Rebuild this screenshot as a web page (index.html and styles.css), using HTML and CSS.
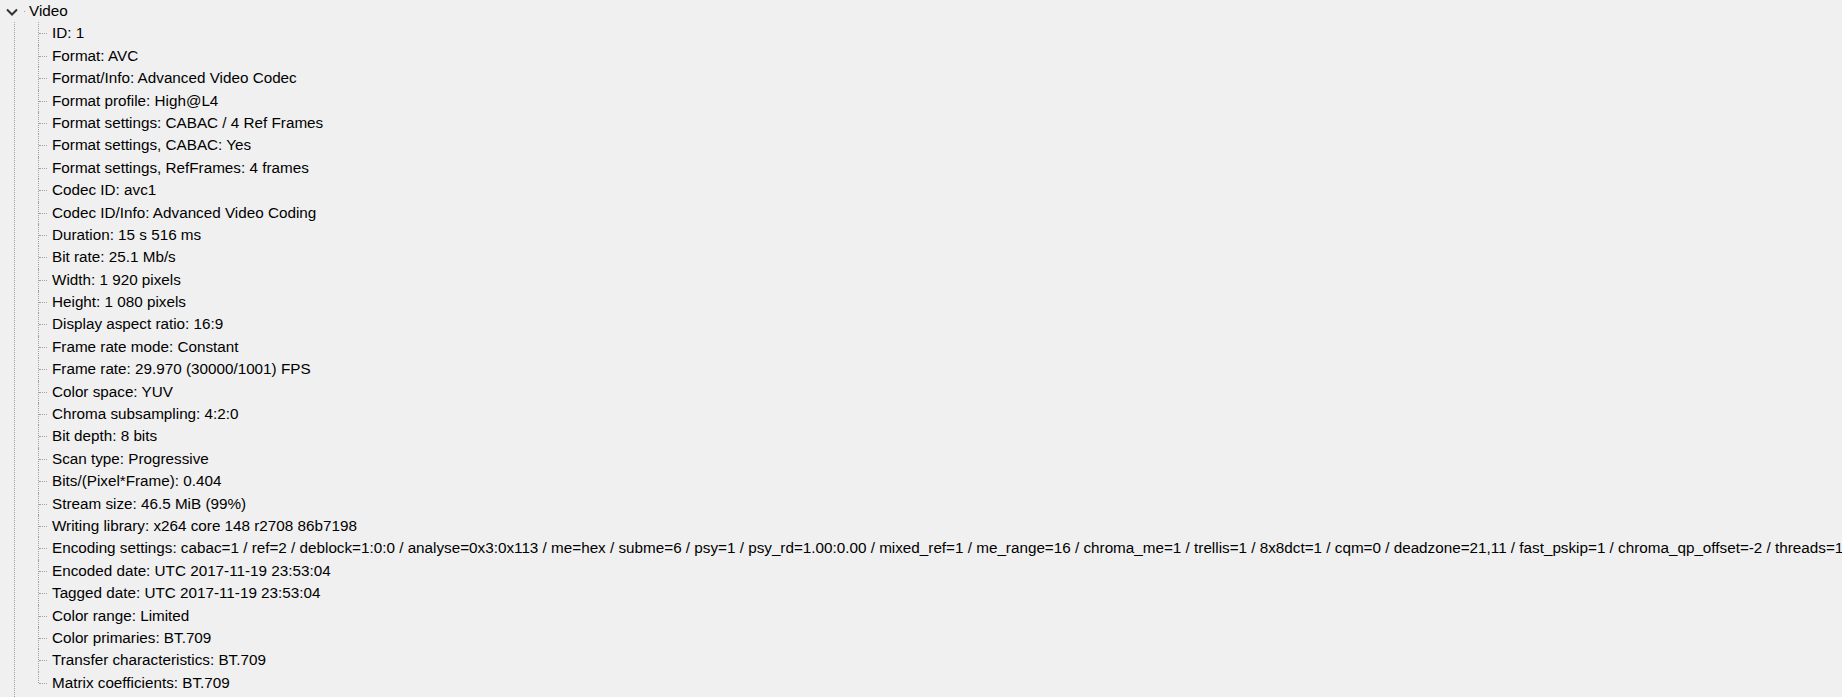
FILE: index.html
```html
<!DOCTYPE html>
<html lang="en">
<head>
  <meta charset="UTF-8">
  <title>MediaInfo - Tree view</title>
  <link rel="stylesheet" href="styles.css">
</head>
<body>
  <div class="tree">
    <div class="row root">
      <svg class="chevron" width="12" height="8" viewBox="0 0 12 8"><path d="M1 1.5 L6 6.5 L11 1.5" fill="none" stroke="#333" stroke-width="2"/></svg>
      <span class="root-dot"></span>
      <span class="label">Video</span>
    </div>
    <div class="level">
      <ul class="children">
        <li>ID: 1</li>
        <li>Format: AVC</li>
        <li>Format/Info: Advanced Video Codec</li>
        <li>Format profile: High@L4</li>
        <li>Format settings: CABAC / 4 Ref Frames</li>
        <li>Format settings, CABAC: Yes</li>
        <li>Format settings, RefFrames: 4 frames</li>
        <li>Codec ID: avc1</li>
        <li>Codec ID/Info: Advanced Video Coding</li>
        <li>Duration: 15 s 516 ms</li>
        <li>Bit rate: 25.1 Mb/s</li>
        <li>Width: 1 920 pixels</li>
        <li>Height: 1 080 pixels</li>
        <li>Display aspect ratio: 16:9</li>
        <li>Frame rate mode: Constant</li>
        <li>Frame rate: 29.970 (30000/1001) FPS</li>
        <li>Color space: YUV</li>
        <li>Chroma subsampling: 4:2:0</li>
        <li>Bit depth: 8 bits</li>
        <li>Scan type: Progressive</li>
        <li>Bits/(Pixel*Frame): 0.404</li>
        <li>Stream size: 46.5 MiB (99%)</li>
        <li>Writing library: x264 core 148 r2708 86b7198</li>
        <li>Encoding settings: cabac=1 / ref=2 / deblock=1:0:0 / analyse=0x3:0x113 / me=hex / subme=6 / psy=1 / psy_rd=1.00:0.00 / mixed_ref=1 / me_range=16 / chroma_me=1 / trellis=1 / 8x8dct=1 / cqm=0 / deadzone=21,11 / fast_pskip=1 / chroma_qp_offset=-2 / threads=12</li>
        <li>Encoded date: UTC 2017-11-19 23:53:04</li>
        <li>Tagged date: UTC 2017-11-19 23:53:04</li>
        <li>Color range: Limited</li>
        <li>Color primaries: BT.709</li>
        <li>Transfer characteristics: BT.709</li>
        <li>Matrix coefficients: BT.709</li>
      </ul>
    </div>
  </div>
</body>
</html>
```

FILE: styles.css
```css
html, body {
  height: 100%;
}
body {
  margin: 0;
  background-color: #f0f0f0;
  color: #000;
  font-family: 'Liberation Sans', Arial, sans-serif;
  font-size: 15.25px;
  overflow: hidden;
}
.tree {
  white-space: nowrap;
  min-height: 100%;
  display: flex;
  flex-direction: column;
}
.row {
  height: 22.4px;
  line-height: 22.4px;
}
.root {
  display: flex;
  align-items: center;
}
.chevron {
  margin-left: 6px;
  margin-top: 1px;
}
.root-dot {
  width: 1px;
  height: 1px;
  background: #a0a0a0;
  margin-left: 6px;
}
.root .label {
  margin-left: 4px;
}
/* ligne verticale du niveau racine */
.level {
  flex: 1;
  margin-left: 14px;
  border-left: 1px dotted #a0a0a0;
}
.children {
  list-style: none;
  margin: 0 0 0 23px;
  padding: 0;
}
.children li {
  position: relative;
  height: 22.4px;
  line-height: 22.4px;
  padding-left: 14px;
}
/* lignes pointillées de l'arbre */
.children li::before {
  content: '';
  position: absolute;
  left: 0;
  top: 0;
  bottom: 0;
  border-left: 1px dotted #a0a0a0;
}
.children li:last-child::before {
  bottom: 50%;
}
.children li::after {
  content: '';
  position: absolute;
  left: 1px;
  top: 11px;
  width: 8px;
  border-top: 1px dotted #a0a0a0;
}
```
